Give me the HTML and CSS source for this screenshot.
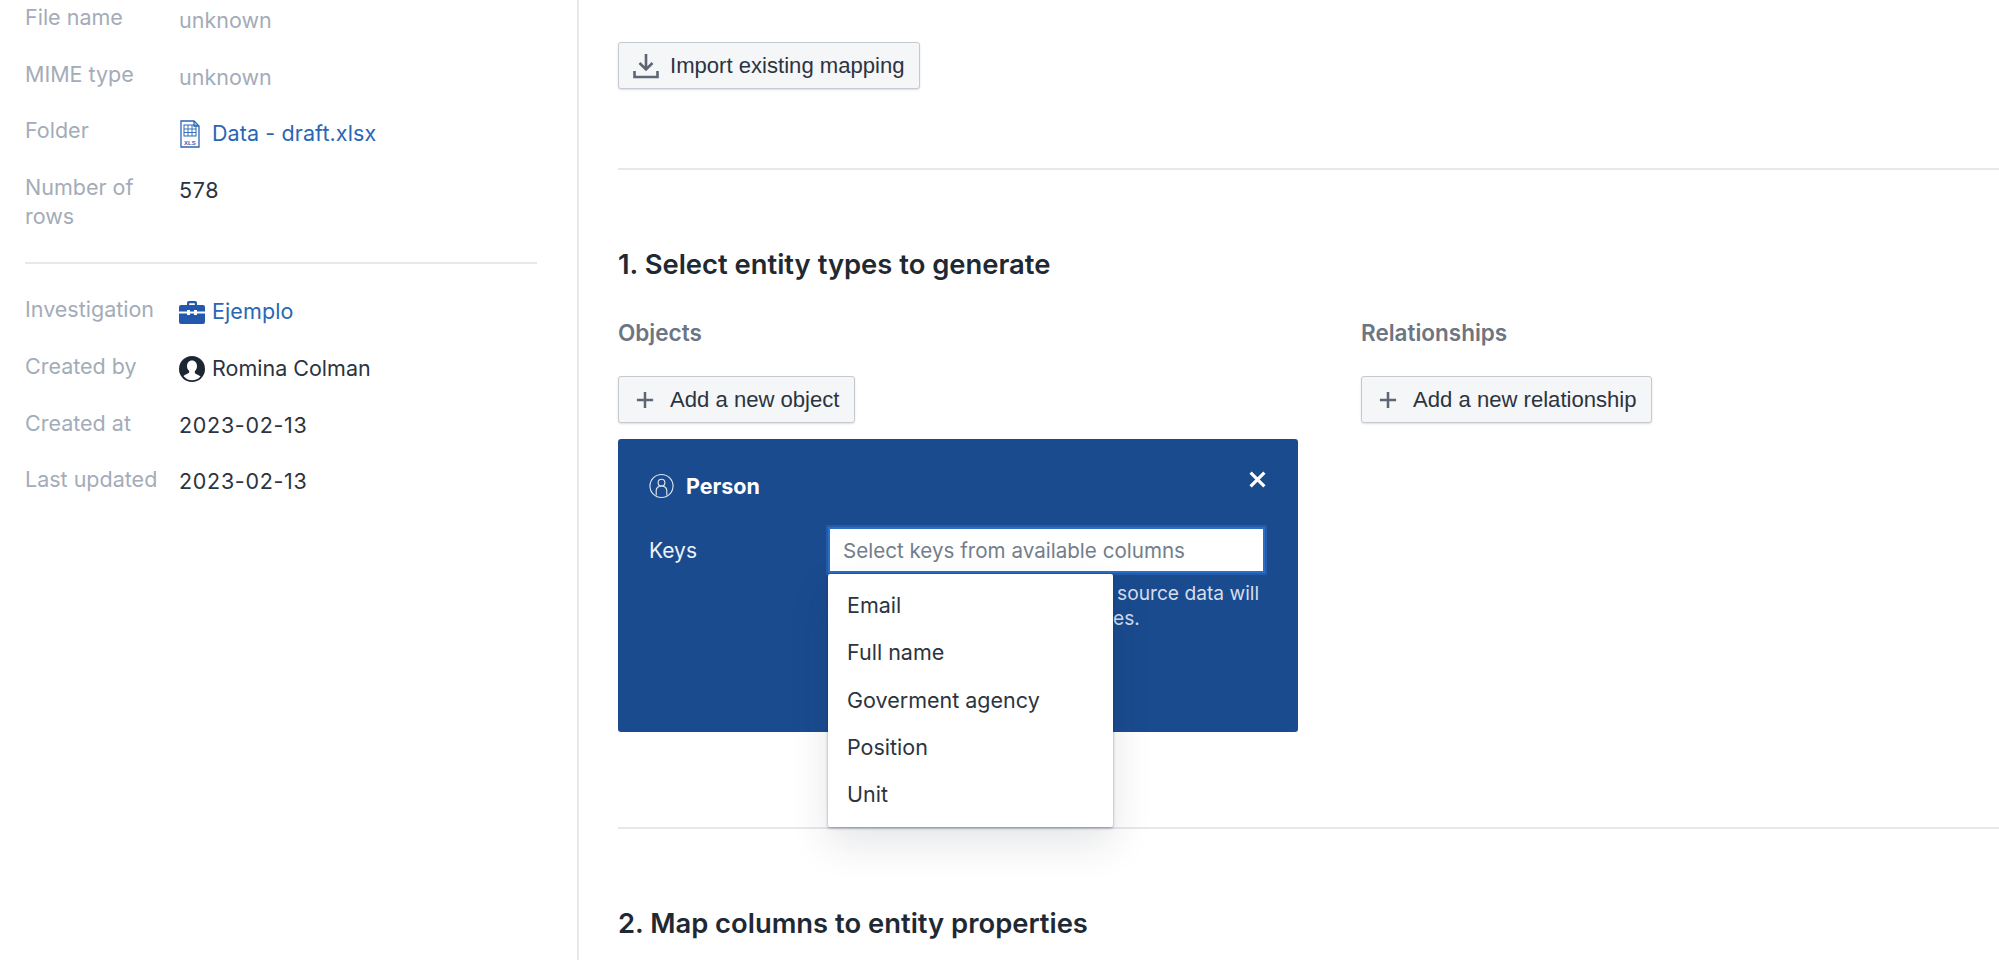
FILE: index.html
```html
<!DOCTYPE html>
<html lang="en">
<head>
<meta charset="utf-8">
<title>Import mapping</title>
<link rel="stylesheet" href="styles.css">
</head>
<body>
<div class="page">
  <aside class="sidebar">
    <dl class="meta">
      <dt>File name</dt><dd class="muted">unknown</dd>
      <dt>MIME type</dt><dd class="muted">unknown</dd>
      <dt>Folder</dt>
      <dd><a class="link">
        <svg class="ico-doc" viewBox="0 0 20 28" fill="none" stroke="#2a66b5" stroke-width="1.3">
          <path d="M1 1h13l5 5v21H1z"/><path d="M14 1v5h5"/>
          <rect x="4" y="5" width="12" height="11" stroke-width="1"/>
          <path d="M4 9h12M4 12.5h12M8 5v11M12 5v11" stroke-width=".9"/>
          <text x="10" y="24.5" text-anchor="middle" class="xls">XLS</text>
        </svg>Data - draft.xlsx</a></dd>
      <dt>Number of rows</dt><dd class="date">578</dd>
    </dl>
    <hr class="side-rule">
    <dl class="meta meta-lower">
      <dt>Investigation</dt>
      <dd><a class="link">
        <svg class="ico-case" viewBox="0 0 26 24" fill="#2259ad">
          <path d="M8 5V3a2 2 0 0 1 2-2h6a2 2 0 0 1 2 2v2h-2.200V3.200h-5.600V5z"/>
          <path d="M2 5h22a2 2 0 0 1 2 2v4.500H18V10h-3v1.500h-4V10H8v1.500H0V7a2 2 0 0 1 2-2z"/>
          <path d="M0 13.500h8V15h3v-1.500h4V15h3v-1.500h8V22a2 2 0 0 1-2 2H2a2 2 0 0 1-2-2z"/>
        </svg>Ejemplo</a></dd>
      <dt>Created by</dt>
      <dd class="with-icon">
        <svg class="ico-user" viewBox="0 0 26 26">
          <circle cx="13" cy="13" r="13" fill="#1d2733"/>
          <path d="M13 4.500c3.200 0 5 2.500 5 5.500 0 2.300-.9 4.100-2.200 5.300v1.400c0 1 3.300 1.900 5.700 3.700A11 11 0 0 1 13 24.200a11 11 0 0 1-8.500-4.300c2.400-1.800 5.700-2.700 5.700-3.700v-1.400C8.900 14.100 8 12.300 8 10c0-3 1.800-5.500 5-5.500z" fill="#fff"/>
        </svg>Romina Colman</dd>
      <dt>Created at</dt><dd class="date">2023-02-13</dd>
      <dt>Last updated</dt><dd class="date">2023-02-13</dd>
    </dl>
  </aside>

  <main class="content">
    <div class="import-row">
      <button class="btn btn-import" type="button">
        <svg class="ico-btn" viewBox="0 0 26 26" fill="none" stroke="#5c6773" stroke-width="2.600">
          <path d="M13 1v15M6.500 10l6.500 6.500 6.500-6.500"/>
          <path d="M1.500 18v6h23v-6"/>
        </svg>Import existing mapping</button>
    </div>
    <hr class="rule">
    <h2 class="step step-one">1. Select entity types to generate</h2>
    <div class="columns">
      <section class="col col-objects">
        <h3 class="col-title">Objects</h3>
        <button class="btn btn-add" type="button">
          <svg class="ico-plus" viewBox="0 0 20 20" fill="none" stroke="#5c6773" stroke-width="2.800"><path d="M10 1v18M1 10h18"/></svg>Add a new object</button>
        <div class="card">
          <div class="card-head">
            <svg class="ico-person" viewBox="0 0 26 26" fill="none" stroke="#dbe5f2" stroke-width="1.200">
              <circle cx="13" cy="13" r="12"/>
              <circle cx="13" cy="9.500" r="3.500"/>
              <path d="M7.500 23v-5.500a5.500 4.500 0 0 1 11 0V23"/>
            </svg>
            <span class="card-title">Person</span>
            <svg class="ico-close" viewBox="0 0 16 16" fill="none" stroke="#fff" stroke-width="3"><path d="M1.500 1.500l13 13M14.500 1.500l-13 13"/></svg>
          </div>
          <div class="card-body">
            <span class="field-label">Keys</span>
            <div class="field">
              <div class="select">Select keys from available columns</div>
              <p class="help"><span class="help-one">source data will</span><span class="help-two">es.</span></p>
              <ul class="menu">
                <li>Email</li>
                <li>Full name</li>
                <li>Goverment agency</li>
                <li>Position</li>
                <li>Unit</li>
              </ul>
            </div>
          </div>
        </div>
      </section>
      <section class="col col-relations">
        <h3 class="col-title">Relationships</h3>
        <button class="btn btn-add" type="button">
          <svg class="ico-plus" viewBox="0 0 20 20" fill="none" stroke="#5c6773" stroke-width="2.800"><path d="M10 1v18M1 10h18"/></svg>Add a new relationship</button>
      </section>
    </div>
    <hr class="rule">
    <h2 class="step step-two">2. Map columns to entity properties</h2>
  </main>
</div>
</body>
</html>
```

FILE: styles.css
```css
* { box-sizing: border-box; }
html, body { margin: 0; height: 960px; overflow: hidden; background: #fff; }
body { font-family: Inter, "Liberation Sans", sans-serif; font-size: 21.500px; color: #1f2933; }
.page { display: flex; height: 960px; }

.sidebar { flex: 0 0 579px; border-right: 2px solid #e6e8ec; padding: 3px 40px 0 25px; }
.meta { display: grid; grid-template-columns: 154px 1fr; row-gap: 24.670px; margin: 0; line-height: 29px; }
.meta dt { color: #a3acb8; padding-right: 20px; }
.meta dd { margin: 0; padding-top: 3px; color: #2b3440; }
.meta dd.muted { color: #a3acb8; }
.meta-lower { row-gap: 25.670px; }
.meta-lower dd { padding-top: 2px; }
.meta dd.date { letter-spacing: .7px; }
.link { color: #2a66b5; display: flex; align-items: center; letter-spacing: .1px; }
.with-icon { display: flex; align-items: center; }
.ico-doc { width: 20px; height: 28px; margin: 0 12px 0 1px; flex: none; }
.xls { font-family: "Liberation Sans", sans-serif; font-size: 6px; font-weight: 700; fill: #2a66b5; stroke: none; }
.ico-case { width: 26px; height: 24px; margin-right: 7px; flex: none; }
.ico-user { width: 26px; height: 26px; margin-right: 7px; flex: none; }
.side-rule { border: 0; border-top: 2px solid #e6e8ec; margin: 31px 0 31.500px; }

.content { flex: 1; padding: 42px 0 0 39px; min-width: 0; }
.import-row { height: 47px; }
.btn {
  display: inline-flex; align-items: center; height: 47px; padding: 0 14px 0 14px;
  font-family: "Liberation Sans", Arial, sans-serif; font-size: 22.100px; color: #2b3440;
  background: #f5f6f8; border: 1px solid #c6cad0; border-radius: 3px;
  box-shadow: 0 1px 2px rgba(30, 40, 60, .15);
}
.ico-btn { width: 26px; height: 26px; margin-right: 11px; flex: none; }
.btn-add { padding-left: 17px; }
.ico-plus { width: 18px; height: 18px; margin-right: 16px; flex: none; }
.rule { border: 0; border-top: 2px solid #e6e8ec; margin: 0; }
.import-row + .rule { margin-top: 79px; }
.step { margin: 0; font-size: 27.400px; font-weight: 600; line-height: 36px; color: #1f2933; }
.step-one { margin-top: 76px; }
.columns { display: flex; height: 508px; margin-top: 37px; }
.col { position: relative; }
.col-objects { flex: none; width: 743px; }
.col-relations { flex: 1; min-width: 0; }
.col-title { margin: 0 0 29px; font-size: 22.500px; font-weight: 600; line-height: 28px; color: #6b7583; }
.card { width: 680px; height: 293px; margin-top: 16px; background: #1a4b8f; border-radius: 3px; padding: 34px 31px; color: #fff; }
.card-head { display: flex; align-items: center; position: relative; height: 26px; }
.ico-person { width: 25px; height: 26px; margin-right: 12px; flex: none; }
.card-title { font-weight: 700; font-size: 21.500px; }
.ico-close { position: absolute; right: 1px; top: -2px; width: 17px; height: 17px; }
.card-body { display: flex; margin-top: 28px; }
.field-label { width: 179px; flex: none; line-height: 48px; font-size: 21px; color: #eef3fa; }
.field { position: relative; width: 437px; }
.select { height: 46px; line-height: 44px; padding-left: 13px; background: #fff; border: 2px solid #2a6ec9; box-shadow: 0 0 0 2px rgba(60, 120, 210, .35); font-size: 20.600px; color: #737e8a; }
.help { margin: 8px 0 0; font-size: 19.200px; line-height: 25px; color: #d4deed; white-space: nowrap; }
.help-one { display: block; margin-left: 289px; }
.help-two { display: block; margin-left: 285px; }
.menu {
  position: absolute; left: 0; top: 47px; z-index: 2; width: 285px; height: 253px;
  margin: 0; padding: 8px 0; list-style: none; background: #fff; border-radius: 2px;
  box-shadow: 0 1px 3px rgba(30, 40, 60, .45), 0 16px 40px rgba(30, 40, 60, .12);
}
.menu li { height: 47.300px; line-height: 47.300px; padding-left: 19px; color: #2b3440; }
.step-two { margin-top: 76px; }
```
